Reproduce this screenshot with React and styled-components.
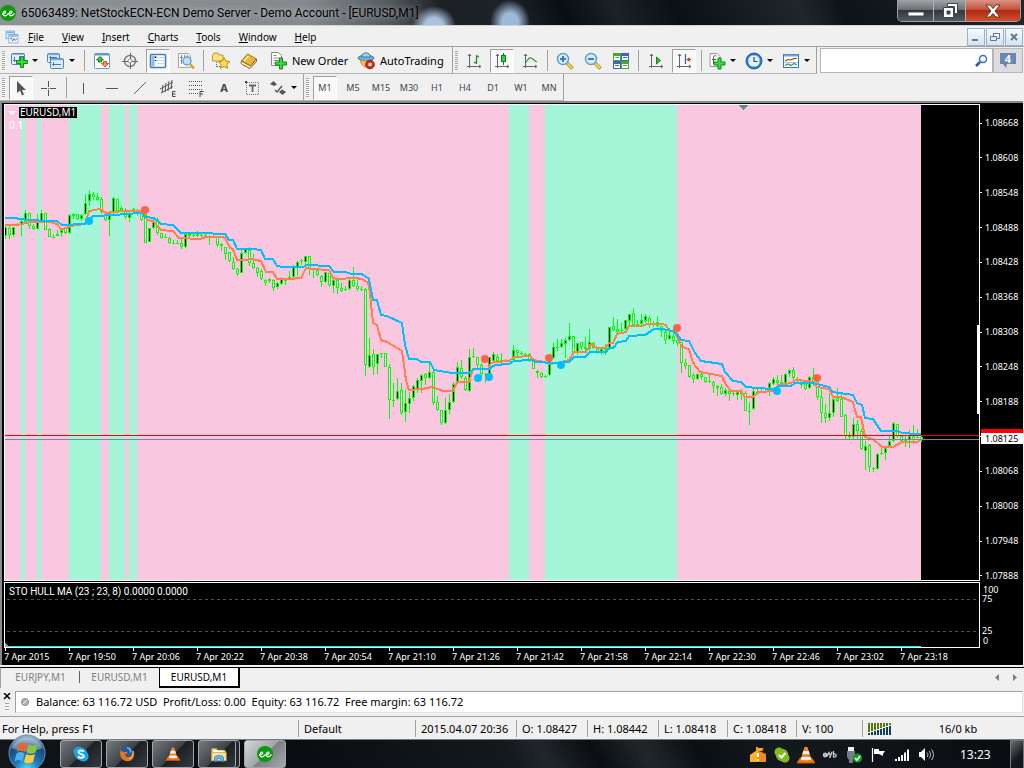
import React from "react";
import styled, { createGlobalStyle, css } from "styled-components";

const Global = createGlobalStyle`
  * { box-sizing: border-box; }
  body { margin: 0; background: #f0f0f0; font: 11px/14px "Noto Sans", "Open Sans", sans-serif; color: #000; }
  button, input { font: inherit; color: inherit; padding: 0; margin: 0; border: 0; background: none; border-radius: 0; }
  svg { display: block; flex: none; }
`;

const PINK = "#f9c8e0";
const MINT = "#a5f5d8";
const LIME = "#00ff00";

/* [high, low, body top, body bottom, rising] */
const CANDLES = [
  [225,239,227,236,1],[226,239,228,235,0],[227,237,227,235,1],[223,226,224,225,0],[220,236,221,224,1],[210,222,213,222,1],[213,229,213,226,0],[224,230,226,229,0],
  [214,229,219,229,1],[210,222,213,221,1],[213,230,213,230,0],[228,237,229,237,0],[234,238,237,237,0],[230,236,234,236,1],[229,237,230,233,1],[227,234,228,233,0],
  [214,234,215,233,1],[213,219,214,216,1],[214,220,214,219,0],[214,221,215,219,1],[194,215,203,214,1],[190,206,194,201,1],[192,200,194,197,0],[193,201,197,200,0],
  [197,214,199,212,0],[213,221,214,220,0],[211,236,213,220,1],[197,214,198,213,1],[199,212,199,211,0],[206,211,208,210,0],[208,219,210,217,0],[211,222,213,218,1],
  [208,213,209,212,0],[209,216,210,214,0],[208,221,210,220,0],[213,243,214,243,0],[228,242,228,242,1],[217,229,222,228,1],[218,235,219,233,0],[233,239,233,238,0],
  [234,238,237,237,0],[237,244,238,243,0],[240,244,243,243,0],[240,244,243,243,0],[239,249,243,247,0],[233,248,234,247,1],[233,237,234,236,0],[234,237,235,236,0],
  [231,237,234,236,1],[233,237,235,236,0],[234,237,235,236,0],[235,245,236,238,0],[235,237,236,237,0],[236,247,237,245,0],[243,251,244,246,0],[247,260,247,254,0],
  [252,262,252,261,0],[257,270,262,269,0],[268,276,269,274,0],[250,273,253,273,1],[248,254,249,253,1],[247,266,250,263,0],[254,269,263,268,0],[267,277,268,273,0],
  [269,280,271,279,0],[279,286,280,283,0],[278,283,279,281,1],[279,291,280,288,0],[282,289,283,287,1],[277,285,279,284,1],[279,285,280,280,0],[271,280,277,278,0],
  [265,278,267,277,1],[261,276,262,267,1],[259,265,260,261,0],[256,270,256,262,1],[256,275,256,269,0],[268,278,269,270,0],[269,276,270,275,0],[275,287,276,282,0],
  [272,283,272,282,1],[273,287,273,285,0],[279,293,280,286,1],[280,294,280,288,0],[283,292,288,291,0],[286,291,289,290,0],[279,290,280,289,1],[267,287,280,286,0],
  [280,291,286,289,0],[286,291,289,290,0],[288,376,289,365,0],[338,368,355,367,1],[349,375,354,367,0],[354,374,354,364,1],[353,358,353,354,0],[353,367,353,367,0],
  [364,419,367,400,0],[383,407,400,400,0],[378,400,391,399,1],[383,415,390,413,0],[389,422,403,412,1],[392,413,398,404,1],[385,401,386,398,1],[378,393,380,390,1],
  [374,393,375,381,1],[373,385,374,378,0],[363,379,372,378,1],[370,405,372,403,0],[396,411,402,410,0],[410,425,410,423,0],[398,424,410,423,1],[394,414,402,410,1],
  [382,403,384,402,1],[362,384,367,382,1],[360,379,368,377,0],[376,391,378,390,0],[349,392,357,391,1],[348,358,356,357,0],[357,368,357,365,0],[363,378,365,374,0],
  [373,383,374,374,0],[357,377,357,376,1],[352,362,354,361,1],[354,362,357,361,0],[353,364,360,362,0],[359,361,360,360,0],[360,362,361,361,0],[345,361,350,360,1],
  [350,356,350,353,0],[351,355,353,353,0],[353,355,354,354,0],[353,362,354,360,0],[358,369,360,369,0],[370,378,371,373,0],[372,378,373,377,0],[375,378,376,376,0],
  [360,376,360,375,1],[343,359,347,358,1],[339,351,347,347,0],[339,348,343,347,1],[338,358,340,344,1],[323,341,336,340,1],[336,353,336,352,0],[343,355,343,353,1],
  [342,350,342,347,0],[337,351,347,349,0],[329,350,342,349,1],[342,349,343,348,0],[347,354,349,353,0],[348,355,349,353,1],[344,355,348,350,0],[327,350,327,349,1],
  [317,331,326,330,0],[319,333,329,332,0],[323,333,330,331,0],[320,330,320,329,1],[314,326,314,321,1],[308,326,313,325,0],[320,326,324,325,0],[314,325,320,324,1],
  [314,323,316,321,1],[317,327,318,325,0],[321,327,323,325,0],[316,327,322,326,0],[326,337,326,331,0],[329,344,332,340,0],[328,340,335,339,1],[333,344,336,341,0],
  [339,346,340,343,0],[342,373,342,363,0],[359,369,363,366,0],[365,378,365,377,0],[373,383,375,379,0],[373,380,374,379,1],[373,380,374,377,0],[377,383,377,382,0],
  [375,383,381,382,0],[381,393,382,386,0],[385,396,386,388,0],[384,395,387,394,0],[388,396,390,394,1],[390,401,391,394,0],[392,396,393,394,0],[390,400,392,395,1],
  [389,400,392,394,0],[391,411,393,411,0],[402,425,411,411,0],[388,410,391,409,1],[389,395,392,393,0],[389,393,391,392,0],[390,393,391,392,0],[382,396,383,388,1],
  [377,385,379,384,1],[375,385,380,383,0],[375,386,382,384,0],[373,385,374,383,1],[369,377,370,374,1],[367,380,370,378,0],[377,382,379,381,0],[379,388,380,385,0],
  [380,390,384,389,0],[376,389,377,388,1],[368,386,377,382,0],[378,400,381,397,0],[390,423,397,413,0],[404,423,413,418,0],[393,421,413,418,1],[398,417,399,413,1],
  [388,402,398,401,0],[392,417,399,417,0],[414,439,415,436,0],[432,439,435,437,0],[418,439,424,437,1],[420,439,424,431,0],[429,450,431,449,0],[441,470,446,451,1],
  [444,472,445,467,0],[467,472,468,468,0],[453,470,454,469,1],[448,455,453,454,0],[446,460,448,453,1],[435,447,441,446,1],[422,442,423,441,1],[424,438,424,436,0],
  [435,443,436,441,0],[435,447,440,442,1],[430,448,436,440,1],[425,444,436,440,0],[429,438,437,437,0],[436,442,437,440,0],
];

const FAST =
  "5,225 17,225 30,222 50,222 57,224 61,229 67,228 70,226 85,224 87,218 89,211 100,209 106,213 115,212 123,211 142,211 147,220 153,221 161,230 173,231 179,238 200,239 206,237 222,237 225,238 230,248 233,249 237,260 245,260 251,259 261,261 266,272 273,272 277,279 290,279 301,278 306,268 313,269 329,270 333,278 337,279 355,278 362,279 367,282 369,285 373,323 377,325 381,340 387,342 402,351 406,380 409,390 422,389 432,387 443,391 453,391 457,382 469,382 473,369 488,369 491,363 495,362 509,361 514,357 530,356 533,360 545,362 550,364 557,363 569,360 574,352 586,352 591,344 597,348 606,348 609,343 613,343 617,334 626,332 629,326 642,326 647,324 662,324 666,325 669,331 674,331 677,337 682,347 689,349 693,363 700,372 722,376 726,385 731,391 741,391 745,397 753,397 759,392 775,391 778,385 791,383 796,380 808,381 813,382 817,387 829,389 833,397 841,397 853,402 857,417 861,417 865,437 873,439 882,447 893,447 902,442 917,442 921,440";
const SLOW =
  "5,218 15,218 20,219 28,220 50,221 57,221 62,225 85,224 89,221 93,216 117,215 124,214 142,213 145,217 154,218 161,224 173,225 181,233 200,233 225,234 229,240 233,240 237,249 252,249 261,250 265,259 273,259 277,266 283,267 303,267 307,265 329,266 334,272 345,272 352,274 362,274 369,279 373,300 377,300 381,315 387,316 402,323 405,345 409,359 417,359 421,362 430,362 434,370 452,373 469,373 474,369 489,369 495,365 509,364 514,361 530,360 537,362 552,363 569,362 574,357 585,357 590,352 606,352 609,348 613,348 618,342 626,341 629,336 645,335 654,329 662,329 673,331 677,334 681,340 689,341 695,353 701,361 722,364 725,372 733,381 741,382 746,387 757,388 773,389 779,386 791,386 795,383 813,383 829,387 833,392 853,395 857,403 862,405 865,418 873,419 881,431 897,431 902,433 917,434 921,434";

const BANDS = [[21, 4], [37, 4], [69, 32], [109, 16], [129, 8], [509, 20], [545, 132]];
const SELL = [[145, 210], [485, 359], [549, 358], [677, 328], [817, 378]];
const BUY = [[89, 221], [478, 378], [489, 377], [561, 365], [777, 391]];

/* ---------- title bar ---------- */
const TitleBar = styled.header`
  display: flex; align-items: flex-start; height: 26px; padding: 0 3px 0 0;
  border-bottom: 1px solid #cfd3d6;
  background:
    radial-gradient(ellipse 22px 20px at 434px 26px, #a9c3de 40%, transparent 100%),
    radial-gradient(ellipse 20px 22px at 510px 22px, #9db9d8 40%, transparent 100%),
    linear-gradient(90deg, #8d9297 0, #85898d 30%, #555a5f 38%, #1c2024 43%, transparent 50%),
    linear-gradient(65deg, #1d2328 50%, #080d12 55%, #1b2126 60%, #0b1016 66%, #20262b 78%, #0d1319 82%, #20262b 100%);
`;
const TitleText = styled.h1`
  flex: 1; margin: 0; padding: 5px 0 0 5px; font-family: Roboto, sans-serif; font-size: 12px; line-height: 16px; font-weight: 400; white-space: nowrap;
  text-shadow: 0 0 6px rgba(255, 255, 255, 0.6);
`;
const TitleIcon = styled.div`padding-top: 5px;`;
const WinControls = styled.div`
  display: flex; height: 22px; border: 1px solid #9aa0a5; border-top: 0; border-radius: 0 0 5px 5px; overflow: hidden;
`;
const WinButton = styled.button`
  display: flex; align-items: center; justify-content: center; height: 21px; width: ${(p) => p.$w}px;
  border-left: 1px solid ${(p) => (p.$first ? "transparent" : "#aeb3b7")};
  background: ${(p) => (p.$close
    ? "linear-gradient(#d99384 0, #c4523a 45%, #b02a10 50%, #d4502c 100%)"
    : "linear-gradient(#a0a4a8 0, #6c7175 45%, #33383c 50%, #565b60 100%)")};
`;

/* ---------- menu ---------- */
const MenuBar = styled.nav`
  display: flex; align-items: center; height: 21px; padding: 1px 1px 0 5px; border-bottom: 1px solid #a0a0a0;
`;
const MenuItems = styled.div`display: flex; flex: 1;`;
const MenuItem = styled.button`
  padding: 0 9px; font-size: 10px; line-height: 16px;
  &::first-letter { text-decoration: underline; }
`;
const MdiButton = styled.button`
  display: flex; align-items: center; justify-content: center; width: 18px; height: 18px; margin-left: 1px;
  border: 1px solid #9eb2c6; background: linear-gradient(#f4f9fd, #d5e5f3);
`;

/* ---------- toolbars ---------- */
const ToolRow = styled.div`display: flex; height: 27px; align-items: stretch;`;
const ToolGroup = styled.div`
  display: flex; flex: none; align-items: center; border-right: 1px solid #a0a0a0; border-bottom: 1px solid #b4b4b4; padding-top: 1px;
`;
const Grip = styled.span`
  width: 3px; height: 20px; margin: 0 2px; background: repeating-linear-gradient(#a4a4a4 0 1px, #f8f8f8 1px 2px);
`;
const Sep = styled.span`width: 1px; height: 21px; margin: 0 3px; background: #a0a0a0;`;
const pressed = css`
  border: 1px solid #a0a0a0; border-right-color: #fff; border-bottom-color: #fff; background: #f9f9f9;
`;
const ToolButton = styled.button`
  display: flex; align-items: center; justify-content: center; width: 24px; height: 24px; margin: 0 2px;
  border: 1px solid transparent; white-space: nowrap; color: #444;
  font-size: ${(p) => (p.$period ? 9 : 11)}px; line-height: 12px;
  ${(p) => p.$on && pressed}
`;
const DropButton = styled.button`
  display: flex; align-items: center; gap: 3px; width: 37px; height: 24px; padding-left: 2px;
  &::after { content: ""; border: 3px solid transparent; border-top-color: #000; border-bottom: 0; }
`;
const TextButton = styled.button`
  display: flex; align-items: center; gap: 3px; width: ${(p) => p.$w}px; height: 24px; padding-left: 6px; white-space: nowrap;
`;
const SearchBox = styled.label`
  display: flex; align-items: center; flex: 1; min-width: 0; height: 25px; margin: 1px 0 0 3px; padding-right: 3px; background: #fff; border: 1px solid #b4b4b4;
`;
const SearchInput = styled.input`flex: 1; min-width: 0; height: 20px; padding: 0 4px; outline: 0;`;
const ChatButton = styled.button`
  display: flex; flex: none; align-items: center; justify-content: center; width: 30px; height: 25px; margin: 1px 1px 0 0;
  border: 1px solid #b8b8b8; background: #dcdcdc;
`;

/* ---------- chart ---------- */
const ChartFrame = styled.main`
  margin: 0 1px 2px 0; padding: 1px 0 0 2px; background: #000; color: #fff;
  border: solid #8a8a8a; border-width: 2px 0 0 2px;
  font-size: 9px; line-height: 12px;
`;
const ChartRow = styled.section`display: flex; margin-bottom: ${(p) => p.$gap || 0}px;`;
const Pane = styled.div`
  position: relative; flex: 1; min-width: 0; height: ${(p) => p.$h}px; border: 1px solid #fff;
`;
const Symbol = styled.div`
  position: absolute; left: 3px; top: 2px; display: flex; align-items: center; gap: 3px; font-size: 10px; line-height: 11px;
  &::before { content: ""; border: 4px solid transparent; border-top-color: #fff; border-bottom: 0; }
  span { background: #000; padding: 0 1px; }
`;
const Lot = styled.div`position: absolute; left: 4px; top: 14px; font-size: 10px;`;
const SplitThumb = styled.div`position: absolute; right: -1px; top: 220px; width: 3px; height: 89px; background: #fff;`;
const IndicatorTitle = styled.div`
  position: absolute; left: 4px; top: 3px; font-family: Roboto, sans-serif; font-size: 10px; white-space: nowrap;
`;
const Axis = styled.div`
  position: relative; display: flex; flex-direction: column; justify-content: space-between; width: 43px; padding-top: 13px; margin-bottom: -1px;
`;
const AxisLabel = styled.span`
  display: flex; align-items: center; gap: 3px; height: 12px; white-space: nowrap;
  &::before { content: ""; width: 2px; height: 1px; background: #fff; }
`;
const AskTag = styled.span`position: absolute; left: 1px; right: 0; top: 325px; height: 8px; background: #f00;`;
const BidTag = styled.span`position: absolute; left: 1px; right: 0; top: 329px; height: 11px; padding-left: 4px; line-height: 11px; background: #fff; color: #000;`;
const LevelAxis = styled.div`display: flex; flex-direction: column; width: 43px; padding: 3px 0 0 2px;`;
const Level = styled.span`height: ${(p) => p.$h}px; line-height: 9px; padding-left: ${(p) => p.$in}px;`;
const TimeAxis = styled.div`display: flex; height: 17px; overflow: hidden;`;
const TimeLabel = styled.span`
  flex: none; width: 64px; white-space: nowrap;
  &::before { content: ""; display: block; width: 1px; height: 3px; margin-left: 1px; background: #fff; }
`;

/* ---------- lower bars ---------- */
const TabBar = styled.div`
  display: flex; height: 21px; border-top: 1px solid #000; border-left: 1px solid #a0a0a0; font-size: 10px;
`;
const Tab = styled.button`
  position: relative; width: 79px; height: 20px; padding: 0 0 3px; color: #808080;
  ${(p) => p.$divider && css`&::after { content: ""; position: absolute; right: 0; top: 3px; width: 1px; height: 12px; background: #606060; }`}
  ${(p) => p.$active && css`width: 81px; color: #000; background: #fff; border: solid #000; border-width: 0 2px 2px 1px; padding: 0;`}
`;
const TabArrows = styled.div`display: flex; gap: 12px; align-items: center; margin-left: auto; padding-right: 7px;`;
const Terminal = styled.section`
  display: flex; align-items: center; height: 29px; padding: 0 1px; border-bottom: 1px solid #a0a0a0;
`;
const TerminalSide = styled.div`display: flex; flex-direction: column; align-items: center; gap: 3px; width: 12px; margin-right: 2px;`;
const SideGrip = styled.span`width: 4px; height: 8px; background: repeating-linear-gradient(#a4a4a4 0 1px, #f8f8f8 1px 3px);`;
const Balance = styled.div`
  display: flex; align-items: center; flex: 1; gap: 7px; height: 22px; padding-left: 5px; background: #fff; border: 1px solid #a0a0a0;
  border-right-color: #e3e3e3; border-bottom-color: #e3e3e3; white-space: pre;
`;
const StatusBar = styled.footer`display: flex; align-items: center; height: 22px; padding-top: 1px;`;
const Cell = styled.span`
  ${(p) => (p.$w ? `flex: none; width: ${p.$w}px; border-left: 1px solid #a0a0a0; padding-left: 5px;` : "flex: 1; padding-left: 2px;")}
  display: flex; align-items: center; height: 17px; white-space: nowrap;
`;
const Traffic = styled.span`flex: 1; text-align: center;`;

/* ---------- taskbar ---------- */
const Taskbar = styled.div`
  display: flex; height: 30px; border-top: 1px solid #747b82; position: relative;
  background: linear-gradient(60deg, #10161b 0, #070b0f 25%, #14191e 50%, #20262b 53%, #0a0e13 58%, #20262a 63%, #0a0f14 68%, #14191e 76%, #080c11 100%);
`;
const StartButton = styled.button`position: absolute; left: 8px; top: -6px; height: 35px; overflow: hidden;`;
const Tasks = styled.div`display: flex; gap: 4px; flex: 1; padding: 0 0 0 60px;`;
const Task = styled.button`
  display: flex; align-items: center; justify-content: center; width: 42px; height: 28px; border: 1px solid #a2a6aa; border-radius: 3px;
  background: ${(p) => (p.$active
    ? "linear-gradient(135deg, #d4d6d8 0, #a4a7aa 50%, #7c8084 52%, #a5a8ab 100%)"
    : "linear-gradient(135deg, #777b80 0, #3d4247 50%, #1c2025 52%, #363a3f 100%)")};
  ${(p) => p.$stack && "box-shadow: inset -3px 0 0 #23272b, inset -4px 0 0 #a2a6aa;"}
`;
const Tray = styled.div`display: flex; align-items: center; gap: 4px; color: #fff;`;
const Clock = styled.time`width: 51px; padding-left: 20px; margin-right: 19px; font-size: 12px;`;
const ShowDesktop = styled.button`width: 14px; height: 29px; border: 1px solid #777; background: linear-gradient(135deg, #6a6f73, #15191d 60%);`;

/* ---------- icons ---------- */
const I = ({ s = 20, children, ...p }) => (
  <svg width={s} height={s} viewBox="0 0 20 20" fill="none" aria-hidden="true" {...p}>{children}</svg>
);
const Plus = ({ x, y }) => (
  <path d={`M${x + 4} ${y}h3v4h4v3h-4v4h-3v-4h-4v-3h4z`} fill="#35e035" stroke="#0d8a16" />
);
const Axes = () => <path d="M5.500 3v14M3 15.500h13.500M4 5l1.500-2L7 5M15 14l2 1.500-2 1.500" stroke="#666" />;
const EE = ({ s }) => (
  <I s={s}>
    <circle cx="10" cy="10" r="10" fill="#0a9a0a" />
    <path d="M2.500 11c3 .3 5-1 4.500-2.700S3.500 8 4 11.500s4 2 6-.500c3 .3 5.500-1 5-2.700s-3.800-.3-3.300 3.200 4.300 2 6.300-1" stroke="#fff" strokeWidth="1.500" />
  </I>
);
const NewChart = () => (
  <I><rect x="2.500" y="2.500" width="13" height="11" rx="1" fill="#e3f0fb" stroke="#4a86c0" /><path d="M3 3.500h12" stroke="#8ab9e2" /><path d="M5.500 6v5M4 9.500h7M10.500 5v4" stroke="#4a7da8" /><Plus x={7.5} y={5.5} /></I>
);
const Profiles = () => (
  <I><rect x="1.500" y="2.500" width="12" height="9" rx="1" fill="#dcebf8" stroke="#4a86c0" /><rect x="4.500" y="7.500" width="13" height="10" rx="1" fill="#dcebf8" stroke="#4a86c0" /><path d="M2 3.500h11M5 8.500h12" stroke="#7fb0dd" strokeWidth="1.500" /><path d="M4.500 5v4M3 6.500h8M7.500 11v4M6 13.500h9" stroke="#4a7da8" /></I>
);
const MarketWatch = () => (
  <I><rect x="2.500" y="2.500" width="15" height="15" rx="1" fill="#fff" stroke="#5a9ad6" /><path d="M3 3.500h14" stroke="#5a9ad6" strokeWidth="2" /><path d="M8 5.500l3.500 3.500H9.500v2h-3V9h-2z" fill="#3fc43f" stroke="#18801f" /><path d="M13 16l3.500-3.500h-2v-2h-3v2h-2z" fill="#ff9a5a" stroke="#d04a20" /></I>
);
const DataWindow = () => (
  <I><circle cx="10" cy="10" r="5.500" stroke="#777" strokeWidth="1.400" /><circle cx="10" cy="10" r="2" stroke="#999" /><path d="M10.500 2v6M10.500 12v6M2 10.500h6M12 10.500h6" stroke="#666" /></I>
);
const Navigator = () => (
  <I><rect x="2.500" y="3.500" width="15" height="13" rx="1" fill="#fff" stroke="#3f7fc2" strokeWidth="1.600" /><rect x="3.500" y="4.500" width="3" height="11" fill="#8fbcea" /><path d="M9 6.500h7M9 9.500h7M9 12.500h7" stroke="#c9d3ee" /><path d="M7.500 6v1M7.500 9v1" stroke="#222" strokeWidth="1.500" /><path d="M7.500 5v1" stroke="#d22" strokeWidth="1.500" /></I>
);
const Tester = () => (
  <I><path d="M2.500 2.500h10l2 2v12h-12z" fill="#f8f8f8" stroke="#a5a5a5" /><path d="M5.500 4v9M8.500 4v3M11.500 4v4M4 6.500h3" stroke="#888" /><circle cx="11" cy="10" r="4" fill="#bfe0fa" stroke="#6aa0cf" strokeWidth="1.400" /><path d="M14 13l4 4.500" stroke="#d9a520" strokeWidth="2.500" /></I>
);
const Favorites = () => (
  <I><path d="M1.500 4.500l1.500-2.500h4l1 2h4v6H1.500z" fill="#fbe588" stroke="#c39420" /><path d="M5.500 11v6M6 15.500h3" stroke="#666" strokeDasharray="1 1" /><path d="M13 6.500l1.800 3.600 4 .5-3 2.700.8 4L13 15.400l-3.600 1.900.8-4-3-2.700 4-.5z" fill="#ffdd55" stroke="#b98510" /></I>
);
const Book = () => (
  <I><path d="M2.500 10l6-7 9 5-6 7z" fill="#eeb63a" stroke="#a66f10" /><path d="M2.500 10c-1 2 0 3 1 3.500l7.500 4 6.500-7V8l-6 7z" fill="#fff2c8" stroke="#8a5a10" /><path d="M5 10l4.500-5" stroke="#fff0b8" strokeWidth="1.500" /></I>
);
const NewOrderIcon = () => (
  <I><path d="M2.500 1.500h7l3 3v10h-10z" fill="#fff" stroke="#888" /><path d="M4.500 4.500h3M4.500 7h6M4.500 9.500h6M4.500 12h4" stroke="#888" /><Plus x={6.500} y={7} /></I>
);
const AutoIcon = () => (
  <I><ellipse cx="9" cy="7" rx="8" ry="2.800" fill="#6db4e0" stroke="#3478a8" /><path d="M4.500 6c0-5.500 9-5.500 9 0z" fill="#9cd3f2" stroke="#3478a8" /><path d="M3.500 9.500c1 6 5 7 8 6.500l4-5.500-6-1z" fill="#f2c55a" stroke="#b98a28" /><circle cx="13" cy="13.500" r="4.300" fill="#d92b1c" stroke="#a01208" /><path d="M11.500 12h3v3h-3z" fill="#fff" /></I>
);
const BarsIcon = () => <I><Axes /><path d="M12.500 4v9M10 11.500h2.500M12.500 5.500H15" stroke="#169a22" strokeWidth="1.300" /></I>;
const CandleIcon = () => <I><Axes /><path d="M11.500 2v12" stroke="#0b7c18" /><rect x="9.500" y="4.500" width="4" height="6" fill="#35cf45" stroke="#0b7c18" /></I>;
const LineIcon = () => <I><Axes /><path d="M5 12c3-2 3-6 6-5s3 3 6 4" stroke="#2a9a35" strokeWidth="1.200" /></I>;
const Zoom = ({ plus }) => (
  <I><path d="M12 12l5.500 5.500" stroke="#b88a18" strokeWidth="3.500" /><path d="M12 12l5 5" stroke="#f5d25a" strokeWidth="2" /><circle cx="8" cy="8" r="5.500" fill="#d6ecfb" stroke="#5b9bd0" strokeWidth="1.400" /><path d={plus ? "M5 8h6M8 5v6" : "M5 8h6"} stroke="#3f7db8" strokeWidth="2" /></I>
);
const Tile = () => (
  <I>
    {[[2, 2, "#4fa81e"], [10, 2, "#3367c9"], [2, 10, "#3367c9"], [10, 10, "#4fa81e"]].map(([x, y, c]) => (
      <g key={`${x}-${y}`}><rect x={x} y={y} width="8" height="8" fill={c} /><path d={`M${x + 1} ${y + 3}h6v4h-6z`} fill="#fff" /><path d={`M${x + 2} ${y + 4.500}h4`} stroke={c} /></g>
    ))}
  </I>
);
const AutoScroll = () => <I><Axes /><path d="M10.500 6l4 3.500-4 3.500z" fill="#35c545" stroke="#148020" /></I>;
const Shift = () => <I><Axes /><path d="M11.500 3v10" stroke="#2b6aa8" strokeWidth="1.300" /><path d="M17 8.500h-3" stroke="#b8381a" strokeWidth="1.300" /><path d="M15.500 6v5L12.500 8.500z" fill="#c8381a" /></I>;
const Indicators = () => (
  <I><path d="M3 2.500h7l3 3v10H3z" fill="#fff" stroke="#999" /><path d="M9.500 5c-2-1-3 0-3 2v6M5 8.500h4" stroke="#555" /><Plus x={7} y={7} /></I>
);
const ClockIcon = () => (
  <I><circle cx="10" cy="10" r="7" fill="#e4f0fb" stroke="#2a7ad2" strokeWidth="2" /><circle cx="10" cy="10" r="8" stroke="#14509c" strokeWidth=".8" /><path d="M10 6v4.500h3.500" stroke="#444" strokeWidth="1.200" /><path d="M10 4v1M10 15v1M4.500 10h1M15 10h1" stroke="#777" /></I>
);
const Template = () => (
  <I><rect x="2.500" y="3.500" width="15" height="13" fill="#fff" stroke="#3a78b5" /><path d="M3 4.500h14" stroke="#6ea6dc" strokeWidth="2" /><path d="M4 10l3-1.500 3 .5 3-1.500h3" stroke="#a03a2a" strokeWidth="1.200" /><path d="M4 14.500l3-1.500 3 1.500 3-2 3 1.500" stroke="#3a9a3a" strokeWidth="1.200" /><path d="M3 11.500h14" stroke="#a8c4e0" /></I>
);
const Cursor = () => <I><path d="M6 3v12l3-2.500 2 5 2-1-2-4.500h4z" fill="#555" /></I>;
const Cross = () => <I><path d="M9.500 3v6M9.500 12v6M2 10.500h6M11 10.500h6M9 10.500h1" stroke="#555" /></I>;
const VLine = () => <I><path d="M9.500 5v11" stroke="#555" /></I>;
const HLine = () => <I><path d="M4 10.500h12" stroke="#555" /></I>;
const Trend = () => <I><path d="M4 16L16 4" stroke="#666" /></I>;
const Channel = () => <I><path d="M2 11L15 4M3 15L15 8.500M5 7L4 15M8 5L7 14M11 3l-1 10M14 2l-1 9" stroke="#555" /><path d="M17.500 13.500h-3v5h3M14.500 16h3" stroke="#444" /></I>;
const Fibo = () => <I><path d="M3 3.500h14M3 7.500h14M3 11.500h14M3 15.500h9" stroke="#555" strokeDasharray="1 1" /><path d="M17.500 13.500h-3.500v5.500M14 16h3" stroke="#444" /></I>;
const LabelFrame = () => <I><path d="M3 4.500h13.500v12H4.500V4" stroke="#777" strokeDasharray="1 1" /><path d="M3 3h2v2H3z" fill="#444" /><path d="M7 7.500h7M10.500 8v6" stroke="#666" strokeWidth="1.800" /></I>;
const Arrows = () => <I><path d="M2 6l3.500-3L9 6.500 6 8zM11 14l3-2.500L18 14l-3.500 3z" fill="#555" /><path d="M7 12l2 2 5-6" stroke="#555" strokeWidth="1.500" /></I>;
const ChartDoc = () => (
  <I s={14}><rect x="1.500" y="1.500" width="12" height="11" fill="#e4effa" stroke="#5a96d8" /><rect x="5.500" y="6.500" width="13" height="12" fill="#fff" stroke="#5a96d8" /><path d="M2 3.500h11M6 8.500h12" stroke="#7db0e8" strokeWidth="2" /><path d="M7 13l2-2 2 5 2-4 2 3 2-3" stroke="#3a76c0" strokeWidth="1.300" /></I>
);
const Cone = ({ s }) => (
  <I s={s}><path d="M4 13h12l3 5H1z" fill="#f27a10" stroke="#b85808" /><path d="M8.500 2h3l4 13c-3 1.500-8 1.500-11 0z" fill="#f58220" /><path d="M7.300 6h5.400l1 3.300H6.300zM5.500 12h9l.7 2.500c-3 1-7 1-10.500 0z" fill="#f3f3f3" /></I>
);
const Orb = () => (
  <svg width="38" height="38" viewBox="0 0 38 38" aria-hidden="true">
    <defs>
      <radialGradient id="orb" cx="50%" cy="95%" r="90%"><stop offset="0" stopColor="#5fe0ff" /><stop offset=".35" stopColor="#1c7cc0" /><stop offset=".75" stopColor="#1b4a7c" /><stop offset="1" stopColor="#8fb0cc" /></radialGradient>
    </defs>
    <circle cx="19" cy="19" r="18" fill="url(#orb)" stroke="#6d8ca8" />
    <path d="M4 14a16 16 0 0 1 30 0c-8 4-20 5-30 0z" fill="#fff" opacity=".35" />
    <path d="M11 10c3-2 5-2 8 0l-2 8c-3-2-5-2-8 0z" fill="#f0642a" />
    <path d="M20.500 10.500c3 2 6 1.500 9 0l-2 8c-3 1.500-6 2-9 0z" fill="#8cc63e" />
    <path d="M8.500 19.500c3-2 5-2 8 0l-2 8c-3-2-5-2-8 0z" fill="#4fb0ec" />
    <path d="M18 20c3 2 6 1.500 9 0l-2 8c-3 1.500-6 2-9 0z" fill="#fccb3a" />
  </svg>
);
const Skype = () => (
  <I s={16}><circle cx="7" cy="7" r="6.500" fill="#14a5e8" /><circle cx="13" cy="13" r="6.500" fill="#14a5e8" /><circle cx="10" cy="10" r="8" fill="#14a5e8" /><path d="M13.500 7c-1-2-6.500-2-6.500.700S13.500 9.800 13.500 12.500 7.500 15.500 6.500 13" stroke="#fff" strokeWidth="2.500" /></I>
);
const Firefox = () => (
  <I s={16}><circle cx="10" cy="10" r="8.500" fill="#2357a8" /><path d="M10 2c3 1 5 3 4.500 6" stroke="#6db4ee" strokeWidth="2" /><path d="M2 4c-2 8 1 14 8 15s11-7 8-13c0 5-3 8-6 8s-5-2-4-4l3-1c-2-3-5 0-6-2-2 0-3-2-3-3z" fill="#e8741a" /><path d="M17.500 6c1 4-1 9-5 10" stroke="#fbc02d" strokeWidth="1.500" /></I>
);
const Explorer = () => (
  <I s={18}><path d="M2 4h5l1.500 2H17v11H2z" fill="#f3dd8c" stroke="#b99c48" /><path d="M4 6h11v3H4z" fill="#fff" /><path d="M2 8.500h16v9H2z" fill="#f7e7a4" stroke="#c4a654" /><path d="M5 18v-4c0-3 10-3 10 0v4h-3v-3H8v3z" fill="#6cb8e8" stroke="#3f88bb" /></I>
);
const TrayHouse = () => <I><path d="M2 10l6-4h3l7 3v8H2z" fill="#f28c1c" /><path d="M2 10l6-4h1v11H2z" fill="#ffb22e" /><path d="M8 7V2h2v1h6l-2 2 2 1h-6v1z" fill="#f5a623" /><path d="M10 8v4M10 14v2" stroke="#fff" strokeWidth="2" /></I>;
const TraySkype = () => <I><circle cx="7" cy="7" r="4.500" fill="#7fba1f" /><circle cx="13" cy="13" r="4.500" fill="#7fba1f" /><circle cx="10" cy="10" r="6.200" fill="#7fba1f" /><path d="M7 10l2.500 2.500 4-4.500" stroke="#fff" strokeWidth="2" /></I>;
const TrayEyb = () => <I><path d="M3.500 10h3.500c0-2.500-3.500-2.500-3.500 0s2.500 2 4 .500l1.500-3 1.500 3.500 1.500-4-2.500 6M13.500 6v6c3.500 1 3.500-4 0-3" stroke="#ccc" strokeWidth="1.300" /></I>;
const TrayUsb = () => <I><path d="M4 2h6v4H4z" fill="#eee" /><path d="M3 6h8v6l-2 3v3H5v-3l-2-3z" fill="#777d82" /><circle cx="13.500" cy="13" r="4.600" fill="#18981f" /><path d="M11 13l2 2 3-4" stroke="#fff" strokeWidth="1.500" /></I>;
const TrayFlag = () => <I><path d="M4.500 3v14" stroke="#fff" strokeWidth="1.200" /><path d="M6 4h5v2h6l-2 3v2l-4-2H6z" fill="#fff" /></I>;
const TrayNet = () => <I><path d="M4 16v-2M7 16v-4M10 16V10M13 16V7.500M16 16V4.500" stroke="#fff" strokeWidth="2" /></I>;
const TraySound = () => <I><path d="M3 7h2l4-4v13l-4-4H3z" fill="#fff" /><path d="M11 7.500c1.200 1.300 1.200 3 0 4.500M13 6c2 2.200 2 5 0 7.500M15.500 4.500c2.500 3 2.500 7.500 0 10.500" stroke="#ccc" /></I>;

const PriceChart = () => (
  <svg width="100%" height="475" shapeRendering="crispEdges" role="img" aria-label="EURUSD one minute candles">
    <g transform="translate(-5 -105)">
      <rect x="5" y="105" width="916" height="475" fill={PINK} />
      {BANDS.map(([x, w]) => <rect key={x} x={x} y="105" width={w} height="475" fill={MINT} />)}
      {CANDLES.map(([hi, lo, top, bot, up], i) => {
        const x = 5 + i * 4;
        return (
          <g key={i}>
            <rect x={x} y={hi} width="1" height={lo - hi} fill={LIME} />
            <rect x={x - 1} y={top} width="3" height={Math.max(1, bot - top)} fill={LIME} />
            {bot - top > 2 && <rect x={x} y={top + 1} width="1" height={bot - top - 2} fill={up ? "#000" : "#fff"} />}
          </g>
        );
      })}
      <polyline points={FAST} fill="none" stroke="#ff7f50" strokeWidth="2" />
      <polyline points={SLOW} fill="none" stroke="#00bfff" strokeWidth="2" />
      {SELL.map(([x, y]) => <circle key={x} cx={x} cy={y} r="4" fill="#ff6347" shapeRendering="auto" />)}
      {BUY.map(([x, y]) => <circle key={x} cx={x} cy={y} r="4" fill="#00bfff" shapeRendering="auto" />)}
      <path d="M738 105h10l-5 5z" fill="#5f8a8a" />
    </g>
    <rect x="0" y="330" width="100%" height="1" fill="#f00" />
    <rect x="0" y="334" width="100%" height="1" fill="#778899" />
  </svg>
);

const IndicatorChart = () => (
  <svg width="100%" height="64" shapeRendering="crispEdges" role="img" aria-label="Oscillator at zero">
    {[16, 48].map((y) => <line key={y} x1="2" x2="100%" y1={y + 0.5} y2={y + 0.5} stroke="#3c5858" strokeDasharray="3 3" />)}
    <rect x="4" y="63" width="912" height="1" fill="#00ffff" />
    <path d="M0 59l4 5H0z" fill="#8aa" />
  </svg>
);

const PRICES = ["1.08668", "1.08608", "1.08548", "1.08488", "1.08428", "1.08368", "1.08308", "1.08248", "1.08188", "", "1.08068", "1.08008", "1.07948", "1.07888"];
const TIMES = ["2015", "19:50", "20:06", "20:22", "20:38", "20:54", "21:10", "21:26", "21:42", "21:58", "22:14", "22:30", "22:46", "23:02", "23:18"];
const PERIODS = ["M1", "M5", "M15", "M30", "H1", "H4", "D1", "W1", "MN"];
const MENUS = ["File", "View", "Insert", "Charts", "Tools", "Window", "Help"];

const Tool = ({ icon, label, on }) => <ToolButton $on={on} aria-label={label} aria-pressed={!!on}>{icon}</ToolButton>;

export default function App() {
  return (
    <>
      <Global />
      <TitleBar>
        <TitleIcon><EE s={16} /></TitleIcon>
        <TitleText>65063489: NetStockECN-ECN Demo Server - Demo Account - [EURUSD,M1]</TitleText>
        <WinControls>
          <WinButton $w={35} $first aria-label="Minimize"><svg width="18" height="12"><rect x="1" y="7" width="16" height="4" fill="#fff" stroke="#444" /></svg></WinButton>
          <WinButton $w={32} aria-label="Restore"><svg width="20" height="18" fill="none"><path d="M7.500 1.500h10v10h-3v-7h-7z" fill="#fff" stroke="#444" /><path d="M3.500 5.500h10v10h-10zM7 9h3v3H7z" fill="#fff" fillRule="evenodd" stroke="#444" /></svg></WinButton>
          <WinButton $w={55} $close aria-label="Close"><svg width="18" height="16"><path d="M2 2h4l3 3.500L12 2h4l-5 6 5 6h-4l-3-3.500L6 14H2l5-6z" fill="#fff" stroke="#5a3028" /></svg></WinButton>
        </WinControls>
      </TitleBar>

      <MenuBar>
        <ChartDoc />
        <MenuItems>{MENUS.map((m) => <MenuItem key={m}>{m}</MenuItem>)}</MenuItems>
        <MdiButton aria-label="Minimize chart"><svg width="12" height="12"><rect x="2" y="8" width="6" height="2" fill="#63788c" /></svg></MdiButton>
        <MdiButton aria-label="Restore chart"><svg width="12" height="12" fill="none" stroke="#63788c"><path d="M4.500 5V2.500h6v5H8M4 2.500h7M1.500 5.500h6v4h-6z" /></svg></MdiButton>
        <MdiButton aria-label="Close chart"><svg width="12" height="12"><path d="M3 3l6 6M9 3L3 9" stroke="#63788c" strokeWidth="2" /></svg></MdiButton>
      </MenuBar>

      <ToolRow>
        <ToolGroup>
          <Grip />
          <DropButton aria-label="New chart"><NewChart /></DropButton>
          <DropButton aria-label="Profiles"><Profiles /></DropButton>
          <Sep />
          <Tool label="Market Watch" icon={<MarketWatch />} />
          <Tool label="Data Window" icon={<DataWindow />} />
          <Tool label="Navigator" on icon={<Navigator />} />
          <Tool label="Strategy Tester" icon={<Tester />} />
          <Sep />
          <Tool label="Favorites" icon={<Favorites />} />
          <Tool label="MetaEditor" icon={<Book />} />
          <TextButton $w={88}><NewOrderIcon />New Order</TextButton>
          <TextButton $w={101}><AutoIcon />AutoTrading</TextButton>
        </ToolGroup>
        <ToolGroup>
          <Grip />
          <Tool label="Bar chart" icon={<BarsIcon />} />
          <Tool label="Candlesticks" on icon={<CandleIcon />} />
          <Tool label="Line chart" icon={<LineIcon />} />
          <Sep />
          <Tool label="Zoom in" icon={<Zoom plus />} />
          <Tool label="Zoom out" icon={<Zoom />} />
          <Tool label="Tile windows" icon={<Tile />} />
          <Sep />
          <Tool label="Auto scroll" icon={<AutoScroll />} />
          <Tool label="Chart shift" on icon={<Shift />} />
          <Sep />
          <DropButton aria-label="Indicators"><Indicators /></DropButton>
          <DropButton aria-label="Periods"><ClockIcon /></DropButton>
          <DropButton aria-label="Templates"><Template /></DropButton>
        </ToolGroup>
        <SearchBox>
          <SearchInput aria-label="Search" />
          <svg width="16" height="16" fill="none"><circle cx="10" cy="6" r="3.500" stroke="#3a6ad0" strokeWidth="1.500" /><path d="M7 9l-4 4" stroke="#2a55b8" strokeWidth="2.500" /></svg>
        </SearchBox>
        <ChatButton aria-label="4 messages">
          <svg width="18" height="18"><path d="M1 1h16v11H8l-1 4-3-4H1z" fill="#6a86b8" /><text x="9" y="11" fill="#fff" fontSize="11" fontWeight="700" textAnchor="middle">4</text></svg>
        </ChatButton>
      </ToolRow>

      <ToolRow>
        <ToolGroup>
          <Grip />
          <Tool label="Cursor" on icon={<Cursor />} />
          <Tool label="Crosshair" icon={<Cross />} />
          <Sep />
          <Tool label="Vertical line" icon={<VLine />} />
          <Tool label="Horizontal line" icon={<HLine />} />
          <Tool label="Trendline" icon={<Trend />} />
          <Tool label="Equidistant channel" icon={<Channel />} />
          <Tool label="Fibonacci retracement" icon={<Fibo />} />
          <ToolButton><b>A</b></ToolButton>
          <Tool label="Text label" icon={<LabelFrame />} />
          <DropButton aria-label="Arrows"><Arrows /></DropButton>
        </ToolGroup>
        <ToolGroup>
          <Grip />
          {PERIODS.map((p) => <ToolButton key={p} $period $on={p === "M1"}>{p}</ToolButton>)}
        </ToolGroup>
      </ToolRow>

      <ChartFrame>
        <ChartRow $gap={1}>
          <Pane $h={477}>
            <PriceChart />
            <Symbol><span>EURUSD,M1</span></Symbol>
            <Lot>0.1</Lot>
            <SplitThumb />
          </Pane>
          <Axis>
            {PRICES.map((p, i) => (p ? <AxisLabel key={p}>{p}</AxisLabel> : <AxisLabel key={i} />))}
            <AskTag /><BidTag>1.08125</BidTag>
          </Axis>
        </ChartRow>
        <ChartRow>
          <Pane $h={66}>
            <IndicatorChart />
            <IndicatorTitle>STO HULL MA (23 ; 23, 8) 0.0000 0.0000</IndicatorTitle>
          </Pane>
          <LevelAxis>
            <Level $h={9} $in={1}>100</Level>
            <Level $h={32} $in={0}>75</Level>
            <Level $h={10} $in={0}>25</Level>
            <Level $h={9} $in={1}>0</Level>
          </LevelAxis>
        </ChartRow>
        <TimeAxis>{TIMES.map((t) => <TimeLabel key={t}>7 Apr {t}</TimeLabel>)}</TimeAxis>
      </ChartFrame>

      <TabBar>
        <Tab $divider>EURJPY,M1</Tab>
        <Tab>EURUSD,M1</Tab>
        <Tab $active>EURUSD,M1</Tab>
        <TabArrows>
          <svg width="5" height="8"><path d="M4 0v7L0 3.500z" fill="#808080" /></svg>
          <svg width="5" height="8"><path d="M1 0v7l4-3.500z" fill="#808080" /></svg>
        </TabArrows>
      </TabBar>

      <Terminal>
        <TerminalSide>
          <svg width="8" height="7"><path d="M1 0l6 6M7 0L1 6" stroke="#000" strokeWidth="1.500" /></svg>
          <SideGrip />
        </TerminalSide>
        <Balance>
          <svg width="8" height="8"><circle cx="4" cy="4" r="3.500" fill="#b4b4b4" stroke="#888" /><path d="M2 6l4-4" stroke="#eee" /></svg>
          {"Balance: 63 116.72 USD  Profit/Loss: 0.00  Equity: 63 116.72  Free margin: 63 116.72"}
        </Balance>
      </Terminal>

      <StatusBar>
        <Cell>For Help, press F1</Cell>
        <Cell $w={117}>Default</Cell>
        <Cell $w={101}>2015.04.07 20:36</Cell>
        <Cell $w={71}>O: 1.08427</Cell>
        <Cell $w={71}>H: 1.08442</Cell>
        <Cell $w={69}>L: 1.08418</Cell>
        <Cell $w={69}>C: 1.08418</Cell>
        <Cell $w={66}>V: 100</Cell>
        <Cell $w={162}>
          <svg width="24" height="12" shapeRendering="crispEdges">
            {Array.from({ length: 8 }, (_, i) => (
              <g key={i}><rect x={i * 3} y="0" width="2" height={9 - i} fill="#5a7a10" /><rect x={i * 3} y={10 - i} width="2" height={2 + i} fill="#10405e" /></g>
            ))}
          </svg>
          <Traffic>16/0 kb</Traffic>
        </Cell>
      </StatusBar>

      <Taskbar>
        <StartButton aria-label="Start"><Orb /></StartButton>
        <Tasks>
          <Task aria-label="Skype"><Skype /></Task>
          <Task aria-label="Firefox"><Firefox /></Task>
          <Task aria-label="VLC"><Cone s={16} /></Task>
          <Task $stack aria-label="Explorer"><Explorer /></Task>
          <Task $active aria-label="MetaTrader"><EE s={16} /></Task>
        </Tasks>
        <Tray>
          <TrayHouse /><TraySkype /><Cone s={20} /><TrayEyb /><TrayUsb /><TrayFlag /><TrayNet /><TraySound />
          <Clock>13:23</Clock>
        </Tray>
        <ShowDesktop aria-label="Show desktop" />
      </Taskbar>
    </>
  );
}
